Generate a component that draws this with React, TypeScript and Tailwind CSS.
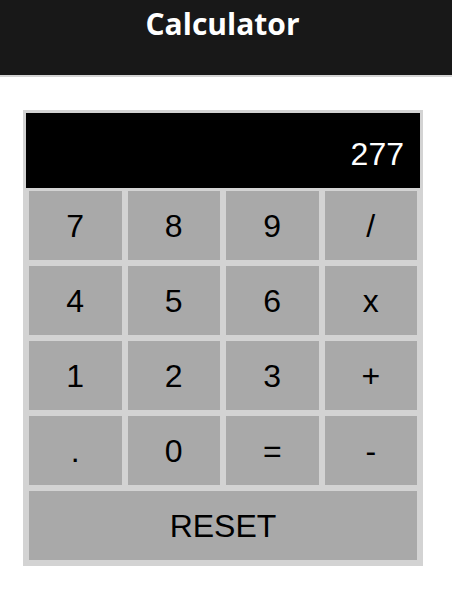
import React from "react";

const keys = ["7", "8", "9", "/", "4", "5", "6", "x", "1", "2", "3", "+", ".", "0", "=", "-"];

export default function App() {
  return (
    <div className="min-h-[589px] bg-white">
      <header className="h-[77px] bg-[#181818] border-b-2 border-[#d3d3d3]">
        <h1
          className="pt-[9px] pr-[7px] text-center text-[30px] leading-[30px] font-bold text-white"
          style={{ fontFamily: '"Open Sans", sans-serif' }}
        >
          Calculator
        </h1>
      </header>
      <div
        className="ml-[23px] mt-[33px] w-[400px] bg-[#d3d3d3] p-[3px]"
        style={{ fontFamily: '"Liberation Sans", Arial, sans-serif' }}
      >
        <div className="flex h-[75px] items-center justify-end bg-black pr-[16px] pt-[6px] text-[32px] text-white">
          277
        </div>
        <div className="grid grid-cols-4 gap-[6px] p-[3px]">
          {keys.map((k) => (
            <button
              key={k}
              className="flex h-[69px] items-center justify-center bg-[#a9a9a9] text-[32px] text-black"
            >
              {k}
            </button>
          ))}
          <button className="col-span-4 flex h-[69px] items-center justify-center bg-[#a9a9a9] text-[32px] text-black">
            RESET
          </button>
        </div>
      </div>
    </div>
  );
}
